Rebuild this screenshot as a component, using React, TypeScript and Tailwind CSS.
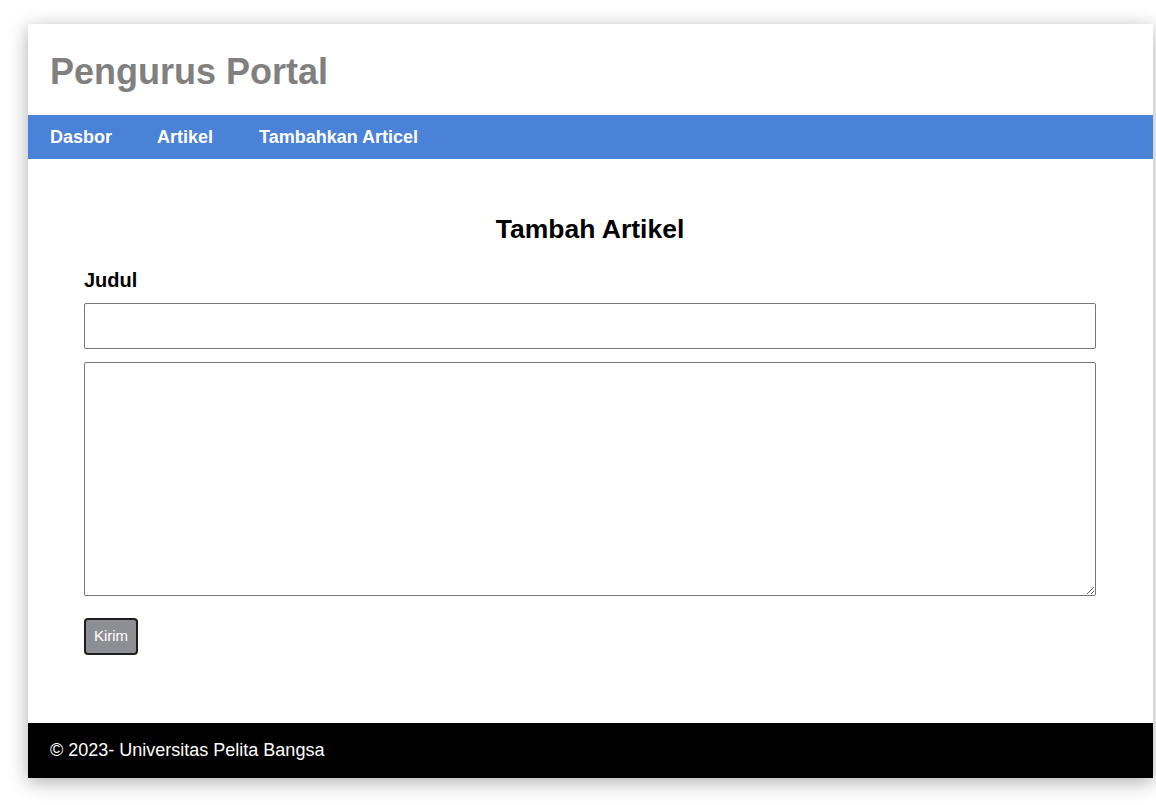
import React from "react";

export default function App() {
  return (
    <div
      className="min-h-[805px] w-[1156px] bg-white pt-[24px] pl-[28px]"
      style={{ fontFamily: '"Liberation Sans", Arial, sans-serif' }}
    >
      <div className="w-[1125px] bg-white shadow-[0_4px_18px_rgba(0,0,0,0.32)]">
        <header className="h-[91px] px-[22px] pt-[27px]">
          <h1 className="text-[36px] leading-[41px] font-bold text-[#808080]">Pengurus Portal</h1>
        </header>
        <nav className="flex h-[44px] items-center bg-[#4a82d8] pl-[22px] text-[18px] font-bold text-white">
          <a className="mr-[45px]">Dasbor</a>
          <a className="mr-[46px]">Artikel</a>
          <a>Tambahkan Articel</a>
        </nav>
        <main className="pl-[56px] pr-[57px] pt-[55px]">
          <h2 className="text-center text-[26.5px] leading-[31px] font-bold text-black">Tambah Artikel</h2>
          <form className="flex flex-col pt-[24px]">
            <label className="text-[20px] leading-[23px] font-bold text-black">Judul</label>
            <input
              type="text"
              className="mt-[11px] h-[46px] w-full rounded-[2px] border border-[#767676] bg-white px-2 outline-none"
            />
            <textarea className="mt-[13px] h-[234px] w-full rounded-[2px] border border-[#767676] bg-white p-2 outline-none" />
            <div className="pt-[22px]">
              <button
                type="button"
                className="flex h-[37px] w-[54px] items-center justify-center rounded-[4px] border-2 border-[#1e1e1e] bg-[#8e8f94] text-[15px] text-white"
              >
                Kirim
              </button>
            </div>
          </form>
          <div className="h-[68px]" />
        </main>
        <footer className="flex h-[55px] items-center bg-black px-[22px] text-[18px] text-white">
          © 2023- Universitas Pelita Bangsa
        </footer>
      </div>
    </div>
  );
}
